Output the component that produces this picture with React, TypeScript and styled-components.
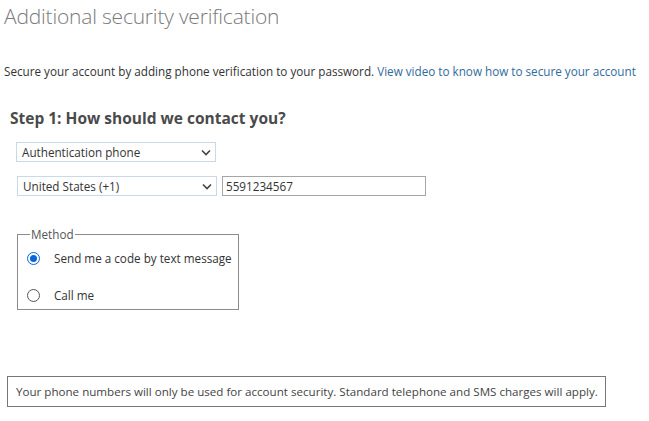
import styled, { createGlobalStyle } from "styled-components";

const GlobalStyle = createGlobalStyle`
  body {
    margin: 0;
    background: #fff;
    font-family: "Open Sans", "Noto Sans", sans-serif;
    color: #333;
  }
`;

const Page = styled.div`
  width: 649px;
  height: 421px;
  padding: 0 0 0 4px;
  box-sizing: border-box;
  overflow: hidden;
`;

const Title = styled.h1`
  margin: 0;
  padding-top: 1px;
  font-size: 21px;
  font-weight: 300;
  line-height: 30px;
  color: #7a7a7a;
  letter-spacing: -0.2px;
`;

const Intro = styled.p`
  margin: 32px 0 0;
  font-size: 11.7px;
  line-height: 16px;
  color: #333;

  a {
    color: #2f6b9c;
    text-decoration: none;
  }
`;

const StepHeading = styled.h2`
  margin: 29px 0 0 6px;
  font-size: 15.5px;
  font-weight: 700;
  line-height: 20px;
  color: #4a4a4a;
`;

const Fields = styled.div`
  display: flex;
  flex-direction: column;
  gap: 14px;
  margin: 14px 0 0 12px;
`;

const Row = styled.div`
  display: flex;
  gap: 5px;
  align-items: center;
`;

const SelectBox = styled.div<{ $offset?: number }>`
  width: 200px;
  height: 20px;
  margin-left: ${(p) => p.$offset ?? 0}px;
  box-sizing: border-box;
  border: 1px solid #c9d9e8;
  display: flex;
  align-items: center;
  justify-content: space-between;
  padding: 0 4px 0 5px;
  font-size: 11.7px;
  color: #333;
`;

const Chevron = () => (
  <svg width="10" height="7" viewBox="0 0 10 7">
    <path d="M1 1.5 L5 5.5 L9 1.5" fill="none" stroke="#444" strokeWidth="1.6" />
  </svg>
);

const PhoneInput = styled.div`
  width: 204px;
  height: 20px;
  box-sizing: border-box;
  border: 1px solid #a6a6a6;
  display: flex;
  align-items: center;
  padding-left: 3px;
  font-size: 11.7px;
  color: #333;
`;

const MethodSet = styled.fieldset`
  margin: 32px 0 0 13px;
  width: 222px;
  height: 82px;
  box-sizing: border-box;
  border: 1px solid #8c8c8c;
  padding: 0 0 0 9px;

  legend {
    padding: 0 1px;
    margin-left: 3px;
    font-size: 11.7px;
    color: #555;
    line-height: 12px;
  }
`;

const Option = styled.label<{ $first?: boolean }>`
  display: flex;
  align-items: center;
  gap: 14px;
  height: 18px;
  margin-top: ${(p) => (p.$first ? "9px" : "19px")};
  font-size: 11.7px;
  color: #333;
`;

const Radio = styled.span<{ $checked?: boolean }>`
  width: 13px;
  height: 13px;
  box-sizing: border-box;
  border-radius: 50%;
  border: 1px solid ${(p) => (p.$checked ? "#0a66d8" : "#555")};
  display: flex;
  align-items: center;
  justify-content: center;

  &::after {
    content: "";
    width: 7px;
    height: 7px;
    border-radius: 50%;
    background: ${(p) => (p.$checked ? "#0a66d8" : "transparent")};
  }
`;

const Notice = styled.div`
  margin: 66px 0 0 3px;
  width: 599px;
  height: 31px;
  box-sizing: border-box;
  border: 1px solid #777;
  display: flex;
  align-items: center;
  padding-left: 8px;
  font-size: 11.6px;
  color: #444;
`;

export default function App() {
  return (
    <>
      <GlobalStyle />
      <Page>
        <Title>Additional security verification</Title>
        <Intro>
          Secure your account by adding phone verification to your password.{" "}
          <a href="#">View video to know how to secure your account</a>
        </Intro>
        <StepHeading>Step 1: How should we contact you?</StepHeading>
        <Fields>
          <SelectBox>
            Authentication phone <Chevron />
          </SelectBox>
          <Row>
            <SelectBox $offset={1}>
              United States (+1) <Chevron />
            </SelectBox>
            <PhoneInput>5591234567</PhoneInput>
          </Row>
        </Fields>
        <MethodSet>
          <legend>Method</legend>
          <Option $first>
            <Radio $checked />
            Send me a code by text message
          </Option>
          <Option>
            <Radio />
            Call me
          </Option>
        </MethodSet>
        <Notice>
          Your phone numbers will only be used for account security. Standard telephone and SMS charges will apply.
        </Notice>
      </Page>
    </>
  );
}
